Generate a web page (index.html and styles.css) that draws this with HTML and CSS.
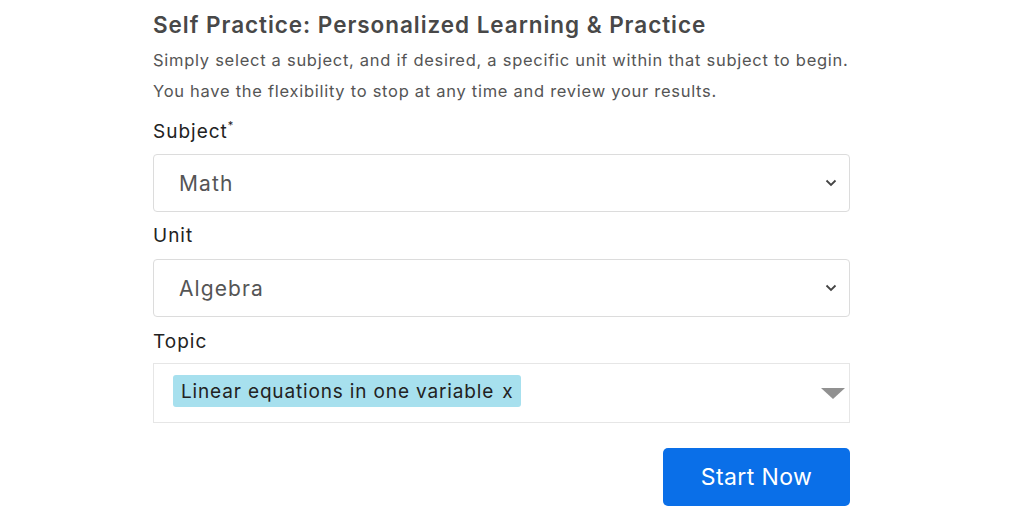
FILE: index.html
```html
<!DOCTYPE html>
<html>
<head>
<meta charset="utf-8">
<link rel="stylesheet" href="styles.css">
</head>
<body>
<div class="wrap">
  <h1 class="title">Self Practice: Personalized Learning &amp; Practice</h1>
  <p class="desc">Simply select a subject, and if desired, a specific unit within that subject to begin.</p>
  <p class="desc">You have the flexibility to stop at any time and review your results.</p>

  <label class="label label-first">Subject<sup>*</sup></label>
  <div class="select select-first">
    <span>Math</span>
    <svg class="chev" width="12" height="8" viewBox="0 0 12 8"><path d="M1.5 1.5 L6 6 L10.5 1.5" fill="none" stroke="#444" stroke-width="1.8"/></svg>
  </div>

  <label class="label label-unit">Unit</label>
  <div class="select select-unit">
    <span>Algebra</span>
    <svg class="chev" width="12" height="8" viewBox="0 0 12 8"><path d="M1.5 1.5 L6 6 L10.5 1.5" fill="none" stroke="#444" stroke-width="1.8"/></svg>
  </div>

  <label class="label label-topic">Topic</label>
  <div class="multi">
    <span class="chip">Linear equations in one variable <span class="x">x</span></span>
    <span class="caret"></span>
  </div>

  <div class="actions">
    <button class="btn">Start Now</button>
  </div>
</div>
</body>
</html>
```
FILE: styles.css
```css
* { box-sizing: border-box; }
html, body { margin: 0; padding: 0; background: #fff; }
body { font-family: "Inter", "Liberation Sans", sans-serif; }
.wrap { width: 697px; margin-left: 153px; padding-top: 10px; display: flex; flex-direction: column; }
.title { margin: 0; font-size: 22.5px; font-weight: 600; color: #484848; line-height: 30px; letter-spacing: 0.95px; }
.desc { margin: 0; font-size: 16.5px; color: #555; line-height: 31px; letter-spacing: 0.72px; }
.desc:first-of-type { margin-top: 5px; }
.label { font-size: 19px; color: #222; line-height: 24px; letter-spacing: 1px; }
.label-first { margin-top: 13px; }
.label-unit { margin-top: 12px; }
.label-topic { margin-top: 13px; }
.label sup { font-size: 11px; vertical-align: 9px; line-height: 0; }
.select { height: 58px; border: 1px solid #dcdcdc; border-radius: 4px; display: flex; align-items: center; justify-content: space-between; padding: 0 12px 0 25px; font-size: 21px; color: #555; letter-spacing: 1.1px; }
.select-first { margin-top: 10px; }
.select-unit { margin-top: 11px; }
.chev { display: block; }
.multi { margin-top: 9px; height: 60px; border: 1px solid #e6e6e6; display: flex; align-items: flex-start; justify-content: space-between; padding: 11px 4px 0 19px; }
.chip { background: #a7e0ee; border-radius: 3px; height: 32px; display: flex; align-items: center; padding: 0 8px 0 8px; font-size: 19px; color: #222; letter-spacing: 0.85px; }
.chip .x { margin-left: 8px; }
.caret { width: 0; height: 0; border-left: 12px solid transparent; border-right: 12px solid transparent; border-top: 11px solid #919191; margin-top: 13px; }
.actions { display: flex; justify-content: flex-end; margin-top: 25px; }
.btn { width: 187px; height: 58px; border: none; border-radius: 5px; background: #0a6fe8; color: #fff; font-family: "Inter", sans-serif; font-size: 23px; letter-spacing: 0.4px; }
```
